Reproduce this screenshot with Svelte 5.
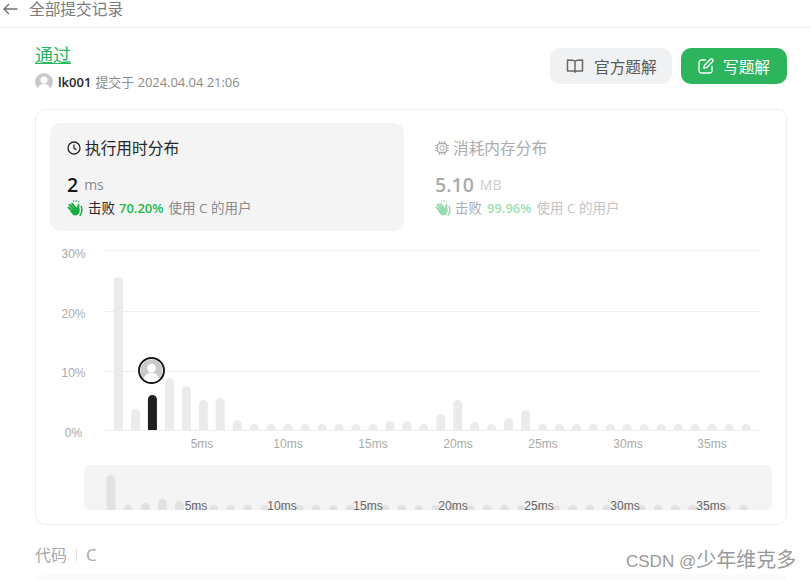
<script>
  const tall = { 0: 153, 1: 21, 2: 35, 3: 52, 4: 44, 5: 30, 6: 32, 7: 10, 16: 9, 17: 9, 19: 16, 20: 30, 21: 8, 23: 12, 24: 20 };
  const bars = Array.from({ length: 38 }, (_, i) => ({ x: 114 + i * 16.96, h: tall[i] ?? 6, active: i === 2 }));
  const grid = [
    { y: 250.5, ty: 257.5, label: '30%' },
    { y: 311.5, ty: 318, label: '20%' },
    { y: 371.5, ty: 377, label: '10%' },
    { y: 430.5, ty: 436.5, label: '0%' }
  ];
  const ticks = [
    { x: 202, label: '5ms' },
    { x: 288, label: '10ms' },
    { x: 373, label: '15ms' },
    { x: 458, label: '20ms' },
    { x: 543, label: '25ms' },
    { x: 628, label: '30ms' },
    { x: 712, label: '35ms' }
  ];
  const miniTall = { 0: 35, 2: 7, 3: 11, 4: 9 };
  const miniBars = Array.from({ length: 38 }, (_, i) => ({ x: 22.5 + i * 17.1, h: miniTall[i] ?? 5 }));
  const miniTicks = [
    { x: 112, label: '5ms' },
    { x: 198, label: '10ms' },
    { x: 284, label: '15ms' },
    { x: 369, label: '20ms' },
    { x: 455, label: '25ms' },
    { x: 541, label: '30ms' },
    { x: 627, label: '35ms' }
  ];
</script>

{#snippet wave()}
  <svg class="wave" viewBox="0 0 16 16" width="16" height="16" aria-hidden="true">
    <path d="M1.500 7.500 6 11.500M2.600 4.800 7.500 10M5.200 3.800 9 8.500M11.600 5 10.800 9" stroke="currentColor" stroke-width="2" stroke-linecap="round" fill="none"/>
    <path d="M4 10.500 10 7.500l2.600.8c.5 3.700-.5 7.200-4.600 7.200-2 0-3.500-2.500-5-4.500z" fill="currentColor"/>
    <path d="M14.300 6.500c.9 3 .9 6-1.200 8.800" stroke="currentColor" stroke-width="1.500" stroke-linecap="round" fill="none"/>
    <path d="M6.500 1.400 6.700.5M9 1.500l.3-1M11.300 2.300l.6-.9" stroke="currentColor" stroke-width="1" stroke-linecap="round" fill="none"/>
  </svg>
{/snippet}

{#snippet avatar(size)}
  <svg class="avatar" viewBox="0 0 18 18" width={size} height={size} aria-hidden="true">
    <circle cx="9" cy="9" r="9" fill="#c9c9c9"/>
    <circle cx="9" cy="7" r="3.600" fill="#fff"/>
    <path d="M2.800 16c.6-3.600 3.200-5 6.200-5s5.600 1.400 6.200 5a9 9 0 0 1-12.400 0z" fill="#fff"/>
  </svg>
{/snippet}

<div class="page">
  <header class="topbar">
    <svg class="back" viewBox="0 0 15 12" width="15" height="12" aria-hidden="true">
      <path d="M14.500 6H1.200M6 1 1 6l5 5" stroke="#6f6f6f" stroke-width="1.400" fill="none"/>
    </svg>
    <span class="crumb">全部提交记录</span>
  </header>

  <main class="content">
    <div class="head">
      <div class="status">
        <a class="passed" href="#top">通过</a>
        <div class="meta">
          {@render avatar(18)}
          <strong>lk001</strong>
          <span>提交于 2024.04.04 21:06</span>
        </div>
      </div>
      <div class="actions">
        <button class="btn ghost">
          <svg viewBox="0 0 18 16" width="18" height="16" aria-hidden="true">
            <path d="M9 3C8 2.300 6 2 1.500 2v11H7c1 0 2 .3 2 1.200 0-.9 1-1.200 2-1.200h5.500V2C12 2 10 2.300 9 3zm0 0v11" fill="none" stroke="#6a6a6a" stroke-width="1.500" stroke-linejoin="round"/>
          </svg>
          官方题解
        </button>
        <button class="btn primary">
          <svg viewBox="0 0 16 16" width="16" height="16" aria-hidden="true">
            <path d="M7.500 2H3.500A2.500 2.500 0 0 0 1 4.500v8A2.500 2.500 0 0 0 3.500 15h8a2.500 2.500 0 0 0 2.500-2.500V8.500" fill="none" stroke="#fff" stroke-width="1.300" stroke-linecap="round"/>
            <path d="M5.800 10.200l.5-2.700L12.500 1.300a1.200 1.200 0 0 1 1.700 0l.5.500a1.200 1.200 0 0 1 0 1.700L8.500 9.700z" fill="none" stroke="#fff" stroke-width="1.300" stroke-linejoin="round"/>
          </svg>
          写题解
        </button>
      </div>
    </div>

    <section class="card">
      <div class="panels">
        <div class="panel active">
          <div class="p-title">
            <svg viewBox="0 0 14 14" width="14" height="14" aria-hidden="true">
              <circle cx="7" cy="7" r="6" fill="none" stroke="#262626" stroke-width="1.300"/>
              <path d="M7 3.500V7.300l2.500 1.400" fill="none" stroke="#262626" stroke-width="1.200"/>
            </svg>
            执行用时分布
          </div>
          <div class="value"><b>2</b><span>ms</span></div>
          <div class="beat">
            {@render wave()}
            <em class="dark">击败</em><i>70.20%</i><span>使用 C 的用户</span>
          </div>
        </div>
        <div class="panel muted">
          <div class="p-title">
            <svg viewBox="0 0 14 14" width="14" height="14" aria-hidden="true">
              <rect x="2.500" y="2.500" width="9" height="9" rx="2" fill="none" stroke="#b0b0b0" stroke-width="1.300"/>
              <rect x="5" y="5" width="4" height="4" rx="1" fill="none" stroke="#b0b0b0" stroke-width="1"/>
              <path d="M4.500 0v2.500M7 0v2.500M9.500 0v2.500M4.500 11.500V14M7 11.500V14M9.500 11.500V14M0 4.500h2.500M0 7h2.500M0 9.500h2.500M11.500 4.500H14M11.500 7H14M11.500 9.500H14" stroke="#b0b0b0" stroke-width="1"/>
            </svg>
            消耗内存分布
          </div>
          <div class="value"><b>5.10</b><span>MB</span></div>
          <div class="beat">
            {@render wave()}
            <em>击败</em><i>99.96%</i><span>使用 C 的用户</span>
          </div>
        </div>
      </div>

      <div class="chart">
        <svg viewBox="36 240 750 212" width="750" height="212" role="img" aria-label="执行用时分布图">
          {#each grid as g}
            <line x1="103" x2="761" y1={g.y} y2={g.y} stroke="#efefef"/>
            <text x="73.500" y={g.ty} text-anchor="middle" class="tick">{g.label}</text>
          {/each}
          {#each bars as b}
            <path d="M{b.x} 430v{-(b.h - 4.500)}a4.500 4.500 0 0 1 9 0v{b.h - 4.500}z" fill={b.active ? '#1f1f1f' : '#ebebeb'}/>
          {/each}
          {#each ticks as t}
            <text x={t.x} y="448" text-anchor="middle" class="tick">{t.label}</text>
          {/each}
          <circle cx="151.500" cy="370.500" r="12.500" fill="#fff" stroke="#1a1a1a" stroke-width="2"/>
          <svg x="140.500" y="359.500" width="22" height="22" viewBox="0 0 18 18">
            <circle cx="9" cy="9" r="9" fill="#c9c9c9"/>
            <circle cx="9" cy="7" r="3.600" fill="#fff"/>
            <path d="M2.800 16c.6-3.600 3.200-5 6.200-5s5.600 1.400 6.200 5a9 9 0 0 1-12.400 0z" fill="#fff"/>
          </svg>
        </svg>
      </div>

      <div class="mini">
        <svg viewBox="0 0 688 45" width="688" height="45" aria-hidden="true">
          {#each miniBars as b}
            <path d="M{b.x} 45v{-(b.h - 4.500)}a4.500 4.500 0 0 1 9 0v{b.h - 4.500}z" fill="#e2e2e2"/>
          {/each}
          {#each miniTicks as t}
            <text x={t.x} y="45" text-anchor="middle" class="mini-tick">{t.label}</text>
          {/each}
        </svg>
      </div>
    </section>

    <div class="code-head">
      <span>代码</span><span class="sep"></span><span class="lang">C</span>
    </div>
    <div class="code-box"></div>
  </main>

  <div class="watermark"><span class="wm-lat">CSDN @</span>少年维克多</div>
</div>

<style>
  :global(body) {
    margin: 0;
    background: #fff;
    font-family: "Open Sans", "Noto Sans CJK SC", sans-serif;
  }
  .page {
    position: relative;
    width: 811px;
    height: 580px;
    overflow: hidden;
  }
  .topbar {
    display: flex;
    align-items: flex-start;
    height: 27px;
    border-bottom: 1px solid #eeeeee;
    padding-left: 3px;
  }
  .back {
    margin-top: 3px;
  }
  .crumb {
    margin-left: 11px;
    font-size: 15.700px;
    line-height: 18px;
    color: #7a7a7a;
  }
  .content {
    padding: 0 24px 0 35px;
  }
  .head {
    display: flex;
    justify-content: space-between;
    align-items: flex-start;
    height: 81px;
  }
  .passed {
    display: inline-block;
    margin-top: 15px;
    font-size: 18px;
    line-height: 24px;
    color: #22b85c;
    text-decoration: underline;
    text-underline-offset: 1px;
    text-decoration-thickness: 1px;
  }
  .meta {
    display: flex;
    align-items: center;
    margin-top: 6px;
    font-size: 13px;
    line-height: 18px;
    color: #8a8a8a;
  }
  .meta strong {
    margin-left: 5px;
    margin-right: 4px;
    color: #262626;
    font-weight: 600;
  }
  .meta span {
    letter-spacing: -0.05px;
  }
  .actions {
    display: flex;
    gap: 9px;
    margin-top: 20px;
  }
  .btn {
    display: flex;
    align-items: center;
    height: 36px;
    border: 0;
    border-radius: 10px;
    font: inherit;
    font-size: 15.700px;
  }
  .ghost {
    width: 122px;
    padding: 0 0 0 16px;
    gap: 10px;
    background: #f0f1f3;
    color: #5a5a5a;
  }
  .primary {
    width: 106px;
    padding: 0 0 0 17px;
    gap: 9px;
    background: #2cb55d;
    color: #fff;
  }
  .card {
    box-sizing: border-box;
    width: 752px;
    height: 416px;
    border: 1px solid #eeeeee;
    border-radius: 10px;
    padding: 13px 14px 0 14px;
  }
  .panels {
    display: flex;
  }
  .panel {
    box-sizing: border-box;
    width: 354px;
    height: 108px;
    padding: 14px 17px;
    border-radius: 10px;
  }
  .panel.active {
    background: #f4f4f4;
  }
  .panel.muted {
    padding-left: 31px;
  }
  .p-title {
    display: flex;
    align-items: center;
    gap: 4px;
    font-size: 15.700px;
    line-height: 22px;
    color: #262626;
  }
  .muted .p-title {
    color: #ababab;
  }
  .value {
    display: flex;
    align-items: center;
    gap: 6px;
    margin-top: 13px;
    line-height: 26px;
  }
  .value b {
    font-size: 19.500px;
    font-weight: 600;
    color: #1a1a1a;
  }
  .value span {
    font-size: 14px;
    color: #8a8a8a;
  }
  .muted .value b {
    color: #aaaaaa;
  }
  .muted .value span {
    color: #cccccc;
  }
  .beat {
    display: flex;
    align-items: center;
    margin-top: 1px;
    font-size: 13px;
    line-height: 18px;
    color: #8a8a8a;
  }
  .active .beat .wave {
    color: #12ad3f;
  }
  .muted .beat .wave {
    color: #97dba8;
  }
  .beat em {
    margin-left: 5px;
    font-size: 13.500px;
    font-style: normal;
    color: #ababab;
  }
  .muted .beat em {
    margin-left: 4px;
  }
  .beat em.dark {
    color: #262626;
  }
  .beat span {
    font-size: 13.500px;
  }
  .beat i {
    margin: 0 5px 0 4px;
    font-style: normal;
    font-weight: 600;
    color: #1cba3f;
  }
  .muted .beat i {
    margin-left: 5px;
    color: #9fe0ad;
  }
  .muted .beat span {
    color: #c4c4c4;
  }
  .chart {
    margin: 9px 0 0 -14px;
    height: 212px;
    line-height: 0;
  }
  .tick {
    font-family: "Liberation Sans", Arial, sans-serif;
    font-size: 12px;
    fill: #aaaaaa;
  }
  .mini {
    margin: 13px 0 0 34px;
    width: 688px;
    height: 45px;
    background: #f4f4f4;
    border-radius: 6px;
    line-height: 0;
  }
  .mini svg {
    overflow: visible;
  }
  .mini-tick {
    font-family: "Liberation Sans", Arial, sans-serif;
    font-size: 12px;
    fill: #666666;
  }
  .code-head {
    display: flex;
    align-items: center;
    height: 24px;
    margin-top: 17px;
    font-size: 16px;
    color: #a8a8a8;
  }
  .sep {
    width: 1px;
    height: 13px;
    margin: 0 9px;
    background: #e0e0e0;
  }
  .lang {
    font-size: 17px;
  }
  .code-box {
    margin-top: 9px;
    width: 752px;
    height: 40px;
    background: #fafafa;
    border-radius: 8px;
  }
  .watermark {
    position: absolute;
    left: 626px;
    top: 546px;
    font-size: 20px;
    line-height: 28px;
    white-space: nowrap;
    color: #9a9a9a;
  }
  .wm-lat {
    font-family: "Liberation Sans", sans-serif;
    font-size: 17px;
  }
</style>
